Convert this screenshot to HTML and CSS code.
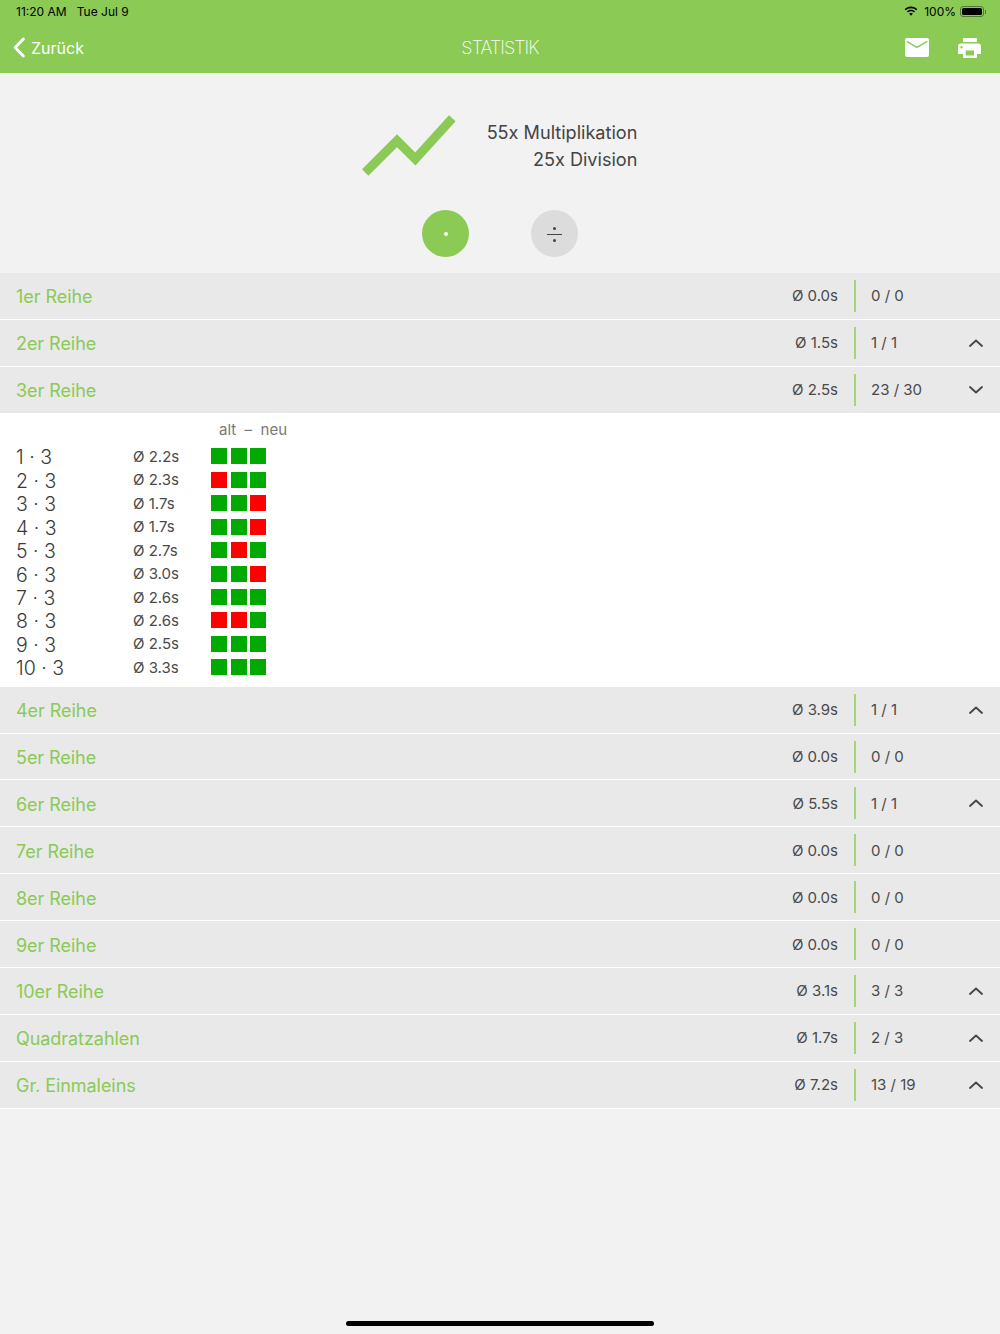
FILE: index.html
```html
<!DOCTYPE html>
<html lang="de">
<head>
<meta charset="utf-8">
<title>Statistik</title>
<link rel="stylesheet" href="styles.css">
</head>
<body>
<header class="topbar">
  <div class="status">
    <span class="status-time">11:20 AM&nbsp;&nbsp; Tue Jul 9</span>
    <span class="status-right">
      <svg class="wifi" viewBox="0 0 16 12" width="14" height="11"><path d="M8 2.200c2.300 0 4.400.9 6 2.400l1.200-1.300C13.300 1.400 10.800.3 8 .3S2.700 1.400.8 3.300L2 4.600c1.600-1.500 3.700-2.400 6-2.400z"/><path d="M8 5.800c1.300 0 2.500.5 3.400 1.300l1.200-1.300C11.400 4.700 9.800 4 8 4s-3.400.7-4.600 1.800l1.200 1.300C5.500 6.300 6.700 5.800 8 5.800z"/><path d="M8 7.700c-.8 0-1.500.3-2.100.8L8 10.900l2.100-2.400c-.6-.5-1.300-.8-2.100-.8z"/></svg>
      <span>100%</span>
      <span class="battery"><span class="battery-fill"></span></span>
      <span class="battery-tip"></span>
    </span>
  </div>
  <nav class="nav">
    <a class="back">
      <svg viewBox="0 0 14 22" width="14" height="21"><path d="M11.500 2 3 11l8.500 9" fill="none" stroke="#fff" stroke-width="3" stroke-linecap="round" stroke-linejoin="round"/></svg>
      <span>Zurück</span>
    </a>
    <h1 class="title">STATISTIK</h1>
    <div class="actions">
      <svg viewBox="0 0 24 19" width="24" height="19"><path fill="#fff" d="M2 0h20a2 2 0 0 1 2 2v15a2 2 0 0 1-2 2H2a2 2 0 0 1-2-2V2a2 2 0 0 1 2-2z"/><path d="M1.700 3.300 11.900 9.300 22.300 3.300" fill="none" stroke="#8aca55" stroke-width="1.500"/></svg>
      <svg viewBox="0 0 23 20" width="23" height="20"><path fill="#fff" fill-rule="evenodd" d="M6 0h12a1 1 0 0 1 1 1v3H5V1a1 1 0 0 1 1-1zM3 5.500h17a3 3 0 0 1 3 3V16h-4v3a1 1 0 0 1-1 1H6a1 1 0 0 1-1-1v-3H0V8.500a3 3 0 0 1 3-3zM7.700 12.400v5h8.300v-5zM3.500 8a1.200 1.200 0 1 0 0 2.400 1.200 1.200 0 0 0 0-2.400z"/></svg>
    </div>
  </nav>
</header>

<main>
  <section class="summary">
    <svg class="trend" viewBox="0 0 96 62" width="96" height="62"><path d="M4.200 57.500 36 25.700 54.300 44 91.300 3.300" fill="none" stroke="#8aca55" stroke-width="9"/></svg>
    <div class="summary-text">
      <div>55x Multiplikation</div>
      <div>25x Division</div>
    </div>
  </section>

  <div class="modes">
    <span class="mode mode-on"><span class="mode-dot"></span></span>
    <span class="mode mode-off"><span class="div-sign"><i></i><b></b><i></i></span></span>
  </div>

  <section class="list">
    <div class="row"><span class="name">1er Reihe</span><span class="avg">Ø 0.0s</span><span class="score">0 / 0</span><span class="chev"></span></div>
    <div class="row"><span class="name">2er Reihe</span><span class="avg">Ø 1.5s</span><span class="score">1 / 1</span><span class="chev"><svg viewBox="0 0 14 8" width="14" height="8"><path d="M1 7l6-5.500L13 7"/></svg></span></div>
    <div class="row"><span class="name">3er Reihe</span><span class="avg">Ø 2.5s</span><span class="score">23 / 30</span><span class="chev"><svg viewBox="0 0 14 8" width="14" height="8"><path d="M1 1l6 5.500L13 1"/></svg></span></div>

    <div class="detail">
      <div class="legend">alt &nbsp;–&nbsp; neu</div>
      <div class="fact"><span class="task">1 · 3</span><span class="time">Ø 2.2s</span><span class="marks"><i class="ok"></i><i class="ok"></i><i class="ok"></i></span></div>
      <div class="fact"><span class="task">2 · 3</span><span class="time">Ø 2.3s</span><span class="marks"><i class="bad"></i><i class="ok"></i><i class="ok"></i></span></div>
      <div class="fact"><span class="task">3 · 3</span><span class="time">Ø 1.7s</span><span class="marks"><i class="ok"></i><i class="ok"></i><i class="bad"></i></span></div>
      <div class="fact"><span class="task">4 · 3</span><span class="time">Ø 1.7s</span><span class="marks"><i class="ok"></i><i class="ok"></i><i class="bad"></i></span></div>
      <div class="fact"><span class="task">5 · 3</span><span class="time">Ø 2.7s</span><span class="marks"><i class="ok"></i><i class="bad"></i><i class="ok"></i></span></div>
      <div class="fact"><span class="task">6 · 3</span><span class="time">Ø 3.0s</span><span class="marks"><i class="ok"></i><i class="ok"></i><i class="bad"></i></span></div>
      <div class="fact"><span class="task">7 · 3</span><span class="time">Ø 2.6s</span><span class="marks"><i class="ok"></i><i class="ok"></i><i class="ok"></i></span></div>
      <div class="fact"><span class="task">8 · 3</span><span class="time">Ø 2.6s</span><span class="marks"><i class="bad"></i><i class="bad"></i><i class="ok"></i></span></div>
      <div class="fact"><span class="task">9 · 3</span><span class="time">Ø 2.5s</span><span class="marks"><i class="ok"></i><i class="ok"></i><i class="ok"></i></span></div>
      <div class="fact"><span class="task">10 · 3</span><span class="time">Ø 3.3s</span><span class="marks"><i class="ok"></i><i class="ok"></i><i class="ok"></i></span></div>
    </div>

    <div class="row"><span class="name">4er Reihe</span><span class="avg">Ø 3.9s</span><span class="score">1 / 1</span><span class="chev"><svg viewBox="0 0 14 8" width="14" height="8"><path d="M1 7l6-5.500L13 7"/></svg></span></div>
    <div class="row"><span class="name">5er Reihe</span><span class="avg">Ø 0.0s</span><span class="score">0 / 0</span><span class="chev"></span></div>
    <div class="row"><span class="name">6er Reihe</span><span class="avg">Ø 5.5s</span><span class="score">1 / 1</span><span class="chev"><svg viewBox="0 0 14 8" width="14" height="8"><path d="M1 7l6-5.500L13 7"/></svg></span></div>
    <div class="row"><span class="name">7er Reihe</span><span class="avg">Ø 0.0s</span><span class="score">0 / 0</span><span class="chev"></span></div>
    <div class="row"><span class="name">8er Reihe</span><span class="avg">Ø 0.0s</span><span class="score">0 / 0</span><span class="chev"></span></div>
    <div class="row"><span class="name">9er Reihe</span><span class="avg">Ø 0.0s</span><span class="score">0 / 0</span><span class="chev"></span></div>
    <div class="row"><span class="name">10er Reihe</span><span class="avg">Ø 3.1s</span><span class="score">3 / 3</span><span class="chev"><svg viewBox="0 0 14 8" width="14" height="8"><path d="M1 7l6-5.500L13 7"/></svg></span></div>
    <div class="row"><span class="name">Quadratzahlen</span><span class="avg">Ø 1.7s</span><span class="score">2 / 3</span><span class="chev"><svg viewBox="0 0 14 8" width="14" height="8"><path d="M1 7l6-5.500L13 7"/></svg></span></div>
    <div class="row"><span class="name">Gr. Einmaleins</span><span class="avg">Ø 7.2s</span><span class="score">13 / 19</span><span class="chev"><svg viewBox="0 0 14 8" width="14" height="8"><path d="M1 7l6-5.500L13 7"/></svg></span></div>
  </section>
</main>
<div class="home-bar"></div>
</body>
</html>
```
FILE: styles.css
```css
* { box-sizing: border-box; }
html, body { margin: 0; height: 1334px; overflow: hidden; }
body {
  background: #f2f2f2;
  font-family: Inter, "Liberation Sans", sans-serif;
  color: #4a4a4a;
  position: relative;
}
.topbar { height: 73px; background: #8aca55; color: #fff; }
.status {
  height: 23px;
  padding: 0 14px 0 16px;
  display: flex;
  align-items: center;
  justify-content: space-between;
  color: #000;
  font-size: 12px;
}
.status-right { display: flex; align-items: center; gap: 4px; }
.wifi { fill: #000; margin-right: 2px; }
.battery {
  width: 24px; height: 11px; margin-left: 0;
  border: 1px solid #4d7a30; border-radius: 3px; padding: 1px; display: flex;
}
.battery-fill { flex: 1; background: #000; border-radius: 1.500px; }
.battery-tip { width: 1.500px; height: 4px; background: #4d7a30; margin-left: -3.500px; }
.nav {
  height: 49px;
  display: grid;
  grid-template-columns: 1fr auto 1fr;
  align-items: center;
  padding: 0 12px;
}
.back { display: flex; align-items: center; gap: 5px; font-size: 16px; }
.title {
  margin: 0;
  font-size: 18px;
  font-weight: 200;
  letter-spacing: -0.9px;
}
.actions { display: flex; justify-content: flex-end; align-items: center; gap: 29px; padding-right: 7px; }

.summary {
  height: 105px;
  padding: 42px 2px 0 0;
  display: flex;
  justify-content: center;
  gap: 30px;
}
.summary-text {
  font-size: 18.100px;
  line-height: 27px;
  text-align: right;
  margin-top: 4px;
  color: #444;
}
.modes { height: 95px; padding-top: 32px; display: flex; justify-content: center; gap: 62px; }
.mode { width: 47px; height: 47px; border-radius: 50%; display: flex; align-items: center; justify-content: center; }
.mode-on { background: #8aca55; }
.mode-off { background: #dcdcdc; }
.mode-dot { width: 4px; height: 4px; border-radius: 50%; background: #fff; }
.div-sign { display: flex; flex-direction: column; align-items: center; gap: 3.500px; padding-top: 2px; }
.div-sign i { width: 3.500px; height: 3.500px; border-radius: 50%; background: #444; }
.div-sign b { width: 14.500px; height: 1.500px; background: #444; }

.row {
  height: 46.900px;
  background: #e9e9e9;
  border-bottom: 1px solid #fff;
  display: flex;
  align-items: center;
  padding-left: 16px;
}
.name { flex: 1; font-size: 18px; color: #8aca55; padding-top: 2px; letter-spacing: -0.05px; }
.avg {
  font-size: 15px;
  padding-right: 16px;
  color: #4a4a4a;
}
.score {
  width: 99px;
  height: 32px;
  border-left: 2px solid #a3d67a;
  padding-left: 15px;
  display: flex;
  align-items: center;
  font-size: 15px;
}
.chev { width: 47px; display: flex; justify-content: flex-start; padding-left: 16px; }
.chev svg { fill: none; stroke: #444; stroke-width: 1.800; stroke-linecap: round; stroke-linejoin: round; }

.detail { height: 273px; background: #fff; padding: 4px 0 0 16px; }
.legend { height: 27px; padding-left: 203px; font-size: 15px; line-height: 24px; color: #777; }
.fact { height: 23.450px; display: flex; align-items: center; }
.task { width: 117px; font-size: 19.500px; font-weight: 300; color: #3a3a3a; padding-top: 2px; }
.time { width: 78px; font-size: 15px; }
.marks { display: flex; gap: 3.500px; }
.marks i { width: 16px; height: 16px; }
.ok { background: #00aa00; }
.bad { background: #ff0000; }

.home-bar {
  position: absolute;
  left: 346px;
  bottom: 8px;
  width: 308px;
  height: 5px;
  border-radius: 3px;
  background: #000;
}
```
